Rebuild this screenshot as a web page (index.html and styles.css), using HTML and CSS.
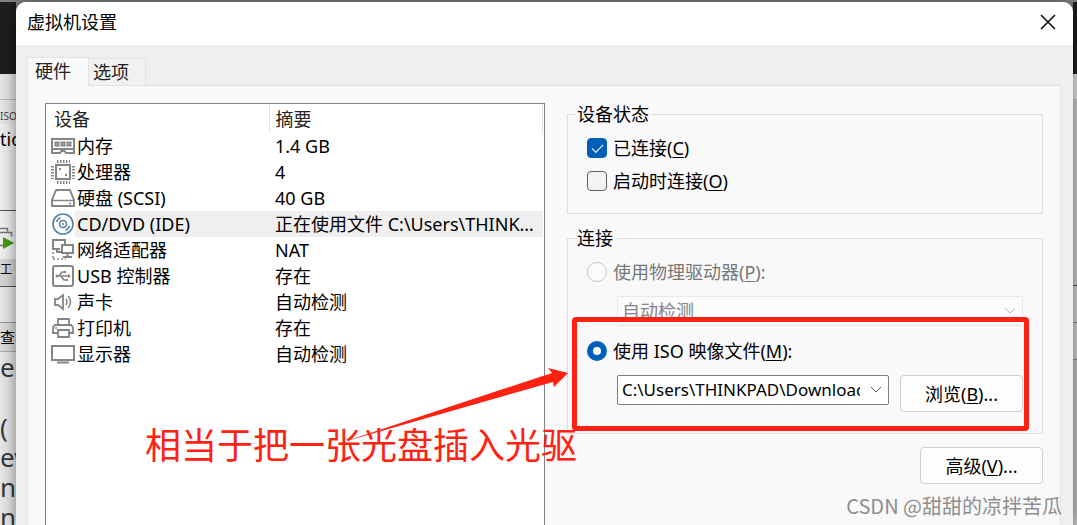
FILE: index.html
```
<!DOCTYPE html>
<html lang="zh-CN">
<head>
    <meta charset="UTF-8">
    <meta name="viewport" content="width=device-width, initial-scale=1.0">
    <title>虚拟机设置</title>
    <link rel="stylesheet" href="styles.css">
</head>
<body>
    <!-- Application window behind the dialog, left edge -->
    <div class="backdrop backdrop-left" aria-hidden="true">
        <div class="strip dark"></div>
        <div class="strip caption"></div>
        <div class="strip tiny">ISO文件</div>
        <div class="strip tab">tion</div>
        <div class="strip run">
            <svg width="16" height="26" viewBox="0 0 16 26">
                <path d="M0 3.5h7.500v3M0 7.500h11.500v4M0 20.500h3" fill="none" stroke="#777" stroke-width="1.500"/>
                <path d="M3 12l11 6-11 6z" fill="#3f9b0b"/>
            </svg>
        </div>
        <div class="strip tool">工</div>
        <div class="strip blank"></div>
        <div class="strip menu">查看</div>
        <div class="strip console">
            <span>er</span>
            <span></span>
            <span>( N</span>
            <span>ew</span>
            <span>na</span>
            <span>nl</span>
        </div>
    </div>

    <main class="dialog">
        <header class="titlebar">
            <h1>虚拟机设置</h1>
            <button class="close" type="button" aria-label="关闭">
                <svg width="16" height="16" viewBox="0 0 16 16">
                    <path d="M1 1l14 14M15 1L1 15" fill="none" stroke="#111" stroke-width="1.600"/>
                </svg>
            </button>
        </header>

        <nav class="tabs">
            <button class="tab-btn active" type="button">硬件</button>
            <button class="tab-btn" type="button">选项</button>
        </nav>

        <div class="pane">
            <div class="device-list">
                <table>
                    <colgroup>
                        <col class="col-icon">
                        <col class="col-name">
                        <col>
                    </colgroup>
                    <thead>
                        <tr>
                            <th colspan="2">设备</th>
                            <th>摘要</th>
                        </tr>
                    </thead>
                    <tbody>
                        <tr>
                            <td class="icon">
                                <svg viewBox="0 0 24 24" fill="none" stroke="#858585">
                                    <path d="M1 5h22v14h-8l-1.500-2h-3L9 19H1z" stroke-width="2"/>
                                    <path d="M4.500 8.500h3v3h-3zM10.500 8.500h3v3h-3zM16.500 8.500h3v3h-3z" stroke-width="2"/>
                                    <path d="M1 15h22" stroke-width="2"/>
                                </svg>
                            </td>
                            <td>内存</td>
                            <td>1.4 GB</td>
                        </tr>
                        <tr>
                            <td class="icon">
                                <svg viewBox="0 0 24 24" fill="none" stroke="#858585" stroke-width="2">
                                    <path d="M5 5h14v14H5z"/>
                                    <path d="M6 1.500h13M6 22.500h13M1.500 6v13M22.500 6v13" stroke-width="3" stroke-dasharray="1.500 1.500"/>
                                    <path d="M8 8h2v2H8zM14 14h2v2h-2z" fill="#858585" stroke="none"/>
                                </svg>
                            </td>
                            <td>处理器</td>
                            <td>4</td>
                        </tr>
                        <tr>
                            <td class="icon">
                                <svg viewBox="0 0 24 24" fill="none" stroke="#858585" stroke-width="2">
                                    <path d="M5 4h14l4 10v6H1v-6z" stroke-linejoin="round"/>
                                    <path d="M1 14.500h22" stroke-width="1.500"/>
                                    <path d="M18 17.500h2" stroke-width="1.500"/>
                                </svg>
                            </td>
                            <td>硬盘 (SCSI)</td>
                            <td>40 GB</td>
                        </tr>
                        <tr class="selected">
                            <td class="icon">
                                <svg viewBox="0 0 24 24" fill="none" stroke="#58809f" stroke-width="1.600">
                                    <circle cx="12" cy="12" r="10"/>
                                    <circle cx="12" cy="12" r="3.500"/>
                                    <circle cx="12" cy="12" r="1" fill="#58809f" stroke="none"/>
                                    <path d="M5.500 10a7 7 0 0 1 4-4.500M18.500 14a7 7 0 0 1-4 4.500"/>
                                </svg>
                            </td>
                            <td>CD/DVD (IDE)</td>
                            <td>正在使用文件 C:\Users\THINKPAD\Downloads</td>
                        </tr>
                        <tr>
                            <td class="icon">
                                <svg viewBox="0 0 24 24" fill="none" stroke="#858585" stroke-width="2">
                                    <path d="M9 11H2V2h12v4M6 11v3h4"/>
                                    <path d="M11 7h11v8H11zM16.500 15v4M12 19h9"/>
                                    <path d="M2 14v8M2 21h13" stroke-width="1.500" stroke-dasharray="2 2"/>
                                </svg>
                            </td>
                            <td>网络适配器</td>
                            <td>NAT</td>
                        </tr>
                        <tr>
                            <td class="icon">
                                <svg viewBox="0 0 24 24" fill="none" stroke="#858585" stroke-width="1.500">
                                    <rect x="2" y="2" width="20" height="20" rx="2" stroke-width="2"/>
                                    <path d="M6 12h12M8 12l3-4h3M10 12l3 4h3"/>
                                    <path d="M17 10l3 2-3 2zM13 7h2v2h-2zM15 15h2v2h-2z" fill="#858585" stroke="none"/>
                                    <circle cx="6" cy="12" r="1.500" fill="#858585" stroke="none"/>
                                </svg>
                            </td>
                            <td>USB 控制器</td>
                            <td>存在</td>
                        </tr>
                        <tr>
                            <td class="icon">
                                <svg viewBox="0 0 24 24" fill="none" stroke="#858585" stroke-width="1.800">
                                    <path d="M4 9h3l5-4v14l-5-4H4z"/>
                                    <path d="M15 9q2 3 0 6M17 6q5 6 0 12" stroke-width="1.500"/>
                                </svg>
                            </td>
                            <td>声卡</td>
                            <td>自动检测</td>
                        </tr>
                        <tr>
                            <td class="icon">
                                <svg viewBox="0 0 24 24" fill="none" stroke="#858585" stroke-width="1.800">
                                    <path d="M7 9V3h11v6"/>
                                    <path d="M7 17H2V11l2-2h16l2 2v6h-4"/>
                                    <path d="M7 14h11v7H7z"/>
                                    <path d="M4 12h2" stroke-width="1.500"/>
                                </svg>
                            </td>
                            <td>打印机</td>
                            <td>存在</td>
                        </tr>
                        <tr>
                            <td class="icon">
                                <svg viewBox="0 0 24 24" fill="none" stroke="#858585" stroke-width="2">
                                    <path d="M1 4h22v14H1z"/>
                                    <path d="M6 20.500h12"/>
                                </svg>
                            </td>
                            <td>显示器</td>
                            <td>自动检测</td>
                        </tr>
                    </tbody>
                </table>
            </div>

            <div class="settings">
                <fieldset class="status">
                    <legend>设备状态</legend>
                    <div class="option">
                        <input type="checkbox" id="connected" checked>
                        <label for="connected">已连接(<u>C</u>)</label>
                    </div>
                    <div class="option">
                        <input type="checkbox" id="connectOnStart">
                        <label for="connectOnStart">启动时连接(<u>O</u>)</label>
                    </div>
                </fieldset>

                <fieldset class="connection">
                    <legend>连接</legend>
                    <div class="option disabled">
                        <input type="radio" name="source" id="physical" disabled>
                        <label for="physical">使用物理驱动器(<u>P</u>):</label>
                    </div>
                    <div class="select disabled">
                        <select aria-label="物理驱动器" disabled>
                            <option>自动检测</option>
                        </select>
                        <svg width="12" height="8" viewBox="0 0 12 8"><path d="M1 1l5 5 5-5" fill="none" stroke="currentColor"/></svg>
                    </div>

                    <div class="iso">
                        <div class="option">
                            <input type="radio" name="source" id="iso" checked>
                            <label for="iso">使用 ISO 映像文件(<u>M</u>):</label>
                        </div>
                        <div class="file-row">
                            <div class="select">
                                <select class="path" aria-label="ISO 映像文件">
                                    <option>C:\Users\THINKPAD\Downloads</option>
                                </select>
                                <svg width="12" height="8" viewBox="0 0 12 8"><path d="M1 1l5 5 5-5" fill="none" stroke="currentColor"/></svg>
                            </div>
                            <button class="btn" type="button">浏览(<u>B</u>)...</button>
                        </div>

                        <!-- Red callout drawn over the ISO option -->
                        <div class="callout">
                            <svg class="arrow" width="230" height="80" viewBox="0 0 230 80">
                                <path d="M2 76L211 7l-4-5 20 5-14 14-1-5z" fill="#ff2112"/>
                            </svg>
                            <p class="note">相当于把一张光盘插入光驱</p>
                        </div>
                    </div>
                </fieldset>

                <button class="btn advanced" type="button">高级(<u>V</u>)...</button>
            </div>
        </div>
    </main>

    <div class="backdrop backdrop-right" aria-hidden="true">
        <div class="strip dark"></div>
        <div class="strip caption"></div>
        <div class="strip mid"></div>
        <div class="strip panel"></div>
        <div class="strip panel"></div>
        <div class="strip rest"></div>
    </div>

    <div class="watermark">CSDN @甜甜的凉拌苦瓜</div>
</body>
</html>
```
FILE: styles.css
```
* {
    box-sizing: border-box;
}

body {
    margin: 0;
    padding-top: 2px;
    height: 100vh;
    overflow: hidden;
    display: grid;
    grid-template-columns: 16px minmax(0, 1fr) 4px;
    background: #858283;
    font-family: "Noto Sans", "Noto Sans CJK SC", sans-serif;
    font-size: 18px;
    line-height: 22px;
    color: #000;
}

button,
select,
input {
    font: inherit;
    color: inherit;
    margin: 0;
}

u {
    text-underline-offset: 2px;
}

/* window behind the dialog */
.backdrop {
    display: flex;
    flex-direction: column;
    overflow: hidden;
    background: #e6e6e6;
}

.strip {
    overflow: hidden;
    white-space: nowrap;
    flex-shrink: 0;
}

.dark {
    height: 72px;
    background: #1d1e20;
}

.caption {
    height: 26px;
    background: #e4e6e6;
    border-bottom: 1px solid #bbb;
}

.tiny {
    height: 24px;
    font-size: 10px;
    line-height: 32px;
    color: #444;
}

.tab {
    height: 87px;
    padding-top: 4px;
    border-bottom: 1px solid #555;
    background: #ededed;
}

.run {
    height: 48px;
    padding-top: 14px;
    background: #efefef;
}

.tool {
    height: 28px;
    font-size: 12px;
    background: #d6d6d6;
    border-bottom: 1px solid #555;
}

.blank {
    height: 36px;
    border-bottom: 1px solid #999;
}

.menu {
    height: 29px;
    font-size: 15px;
    line-height: 28px;
    background: #dcdcdc;
    border-bottom: 1px solid #aaa;
}

.console {
    font-size: 26px;
    line-height: 30px;
    color: #333b3f;
}

.console span {
    display: block;
    height: 30px;
}

.mid {
    height: 186px;
    background: #cdcdd0;
    border-bottom: 1px solid #555;
}

.panel {
    height: 37px;
    background: #d2d2d2;
    border-bottom: 1px solid #888;
}

.rest {
    flex: 1;
    background: #c4c4c4;
}

/* dialog */
.dialog {
    position: relative;
    display: flex;
    flex-direction: column;
    min-height: 0;
    background: #efefef;
    border-radius: 10px 10px 0 0;
    box-shadow: 0 0 16px rgba(0, 0, 0, 0.5);
}

.titlebar {
    height: 43px;
    flex-shrink: 0;
    display: flex;
    align-items: center;
    justify-content: space-between;
    padding: 0 17px 3px 11px;
    background: #fff;
    border-radius: 10px 10px 0 0;
}

.titlebar h1 {
    margin: 0;
    font-size: 18px;
    font-weight: 400;
}

.close {
    display: flex;
    padding: 0;
    border: none;
    background: none;
}

.tabs {
    height: 40px;
    flex-shrink: 0;
    display: flex;
    align-items: flex-end;
    padding: 0 11px;
}

.tab-btn {
    height: 27px;
    width: 57px;
    padding: 0 0 1px 4px;
    text-align: left;
    color: #222;
    background: #f1f1f1;
    border: 1px solid #e2e2e2;
    border-bottom: none;
    border-left: none;
}

.tab-btn.active {
    position: relative;
    z-index: 1;
    height: 29px;
    width: 62px;
    margin-bottom: -1px;
    padding: 0 0 2px 7px;
    border-left: 1px solid #e2e2e2;
    background: #f9f9f9;
}

.pane {
    flex: 1;
    min-height: 0;
    margin: 0 12px 0 11px;
    padding: 17px 17px 0 17px;
    display: grid;
    grid-template-columns: minmax(0, 500fr) minmax(0, 476fr);
    gap: 22px;
    background: #f9f9f9;
    border: 1px solid #e2e2e2;
    border-bottom: none;
}

.device-list {
    background: #fff;
    border: 1px solid #7f838c;
    border-bottom: none;
    padding-right: 1px;
}

table {
    width: 100%;
    table-layout: fixed;
    border-collapse: collapse;
}

.col-icon {
    width: 29px;
}

.col-name {
    width: 194px;
}

th {
    height: 29px;
    padding: 0 0 0 8px;
    text-align: left;
    font-weight: 400;
    color: #222;
    border-right: 1px solid #e2e2e2;
}

th + th {
    padding-left: 6px;
}

td {
    height: 26px;
    padding: 0 6px 0 2px;
    overflow: hidden;
    white-space: nowrap;
    text-overflow: ellipsis;
}

td:last-child {
    padding-left: 6px;
}

td.icon {
    padding: 0 0 0 5px;
}

.icon svg {
    display: block;
    width: 24px;
    height: 24px;
}

.selected td {
    background: #efefef;
}

.selected td.icon {
    background: #fff;
}

/* right side */
.settings {
    display: flex;
    flex-direction: column;
    min-width: 0;
}

fieldset {
    min-width: 0;
    margin: 0 0 13px;
    padding: 12px 19px 21px;
    border: 1px solid #dcdcdc;
}

legend {
    margin-left: -12px;
    padding: 0 3px 0 2px;
    height: 22px;
}

.option {
    display: flex;
    align-items: center;
    gap: 6px;
    height: 22px;
}

.status .option + .option {
    margin-top: 11px;
}

.option.disabled {
    color: #777;
}

.option input {
    appearance: none;
    width: 20px;
    height: 20px;
    border: 1px solid #5f5f5f;
    border-radius: 4px;
    background: #f3f3f3;
    display: grid;
    place-items: center;
}

.option input[type="checkbox"]:checked {
    background: #005fb8;
    border-color: #005fb8;
}

.option input[type="checkbox"]:checked::before {
    content: "";
    width: 10px;
    height: 5px;
    margin-top: -3px;
    border-left: 1px solid #fff;
    border-bottom: 1px solid #fff;
    transform: rotate(-45deg);
}

.option input[type="radio"] {
    border-radius: 50%;
}

.option input[type="radio"]:checked {
    border: 6px solid #005fb8;
    background: #fff;
}

.option input:disabled {
    border-color: #c3c3c3;
    background: #fbfbfb;
}

.select {
    position: relative;
    flex: 1;
    min-width: 0;
}

.select select {
    appearance: none;
    display: block;
    width: 100%;
    height: 30px;
    padding: 0 28px 0 4px;
    border: 1px solid #7d7d7d;
    border-radius: 2px;
    background: #fff;
}

.select .path {
    font-size: 17px;
}

.select svg {
    position: absolute;
    right: 7px;
    top: 11px;
    color: #555;
    pointer-events: none;
}

.connection > .select {
    margin: 13px 0 14px 30px;
}

.select.disabled select {
    color: #858585;
    opacity: 1;
    background: #fbfbfb;
    border-color: #e8e8e8;
}

.select.disabled svg {
    color: #b5b5b5;
}

.iso {
    position: relative;
}

.file-row {
    display: flex;
    align-items: flex-end;
    gap: 11px;
    margin: 13px 0 0 30px;
}

.file-row .select {
    align-self: flex-start;
}

.btn {
    width: 123px;
    height: 37px;
    padding: 0;
    background: #fdfdfd;
    border: 1px solid #d0d0d0;
    border-radius: 4px;
}

.advanced {
    align-self: flex-end;
}

.callout {
    position: absolute;
    inset: -23px -6px -19px -15px;
    border: 5px solid #ff2112;
    border-radius: 4px;
    pointer-events: none;
}

.arrow {
    position: absolute;
    right: 100%;
    top: 44px;
    margin-right: 6px;
}

.note {
    position: absolute;
    right: 100%;
    top: 100px;
    margin: 0;
    font-size: 36px;
    line-height: 48px;
    white-space: nowrap;
    color: #ff2112;
}

.watermark {
    position: absolute;
    right: 15px;
    bottom: 8px;
    font-family: "Noto Sans CJK SC", sans-serif;
    font-size: 20px;
    color: #8e8e8e;
}
```
